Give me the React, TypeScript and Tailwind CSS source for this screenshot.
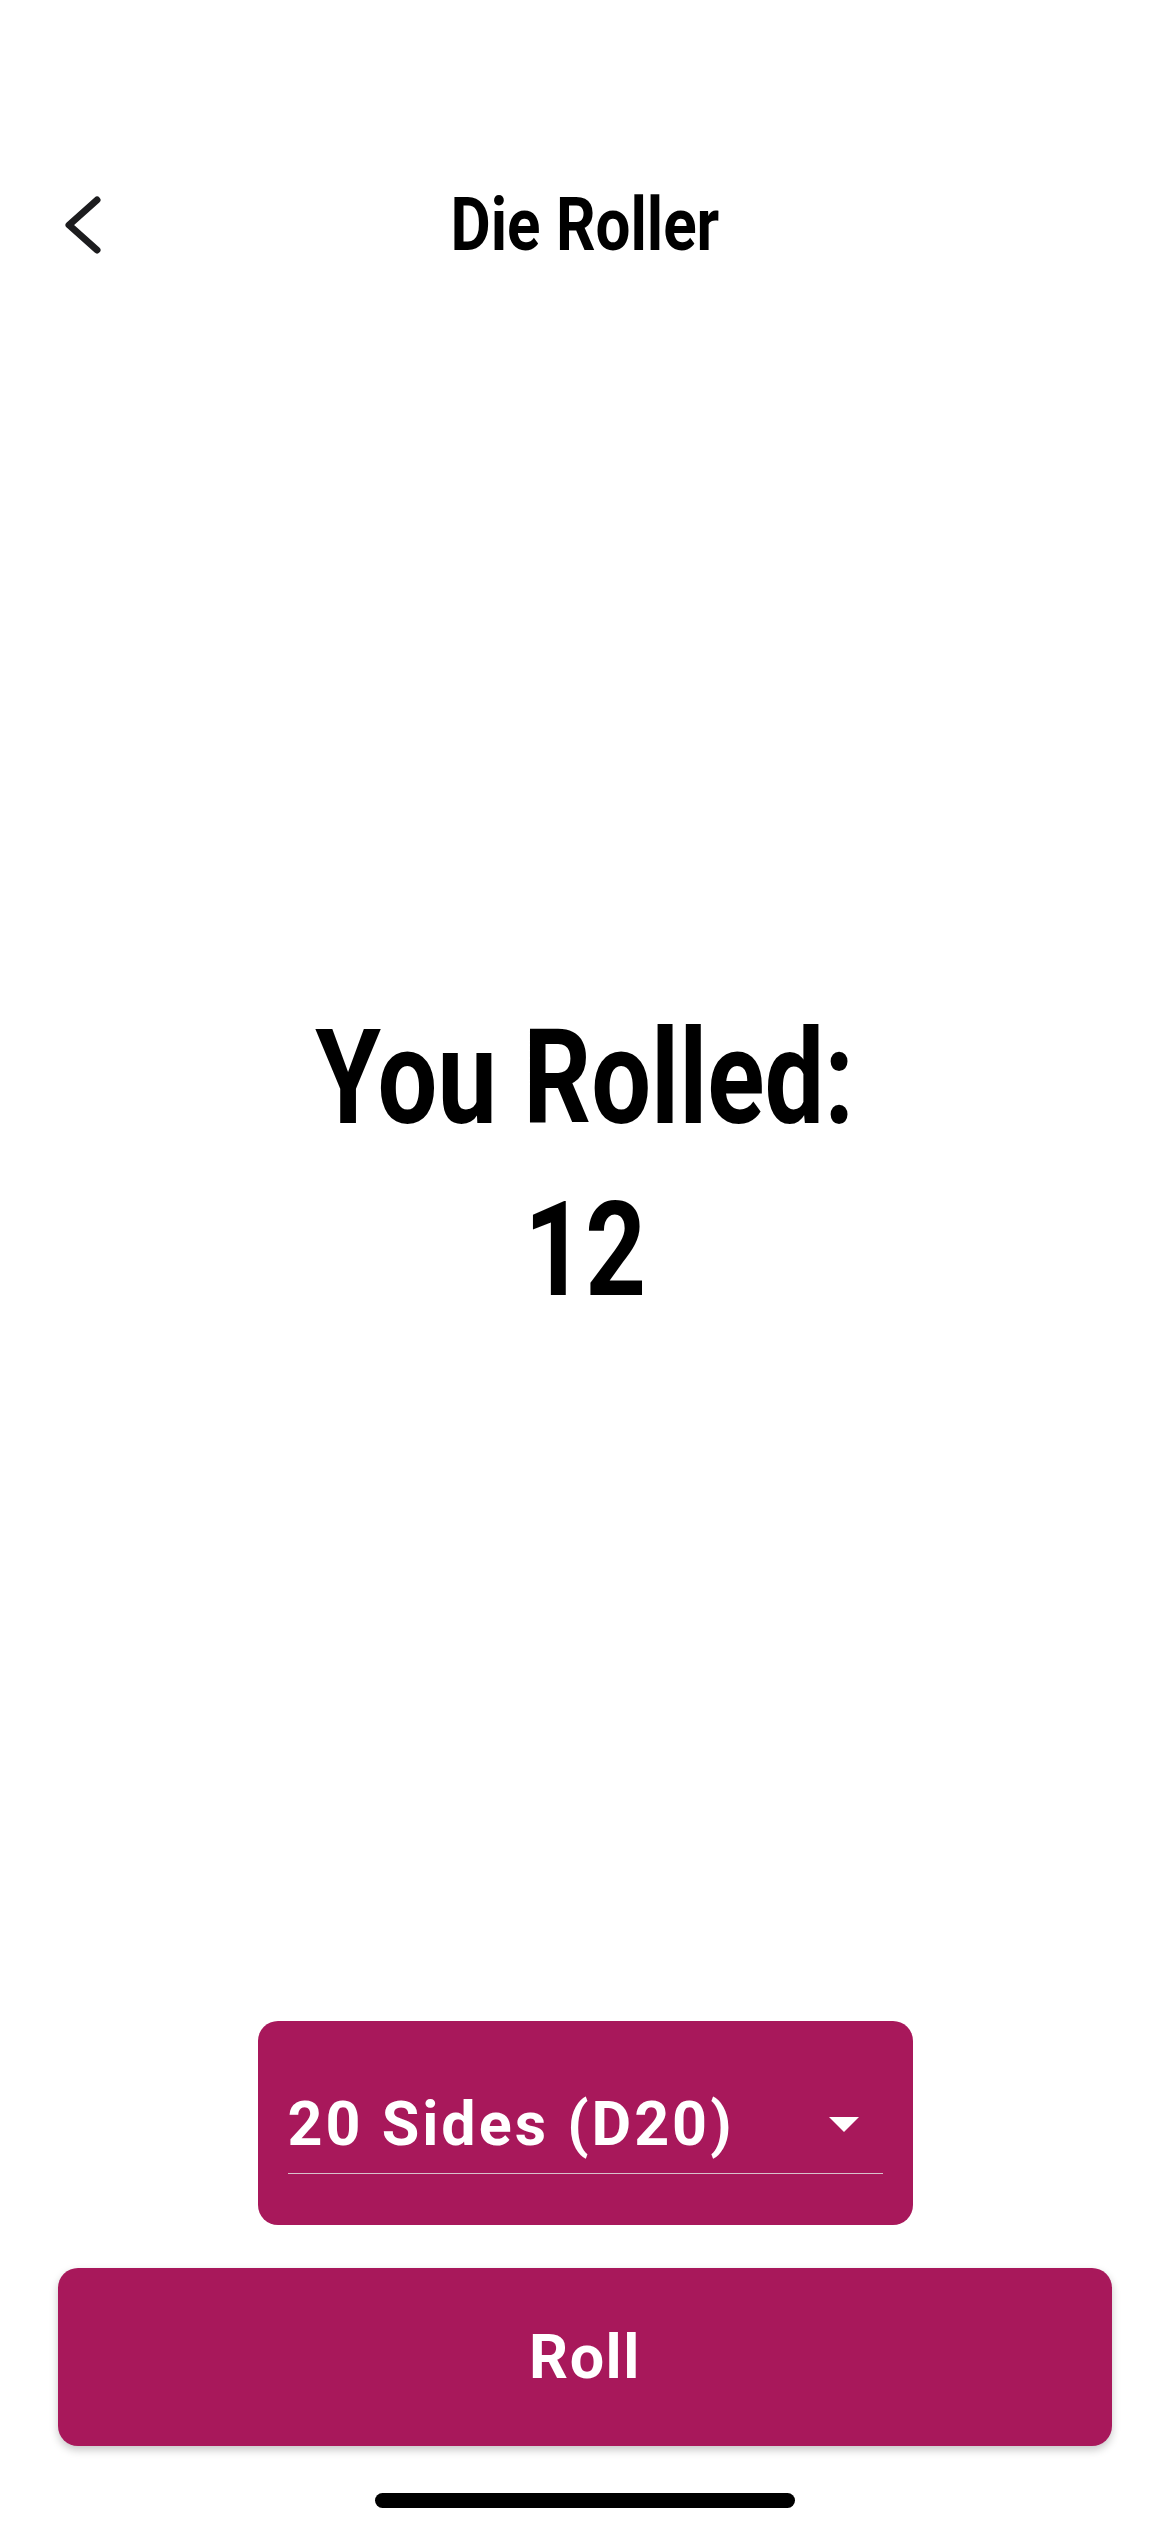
import React, { useState } from 'react';

const ROBOTO = "font-['Roboto','Liberation_Sans',sans-serif]";

const BackChevron: React.FC = () => (
    <svg width="42" height="58" viewBox="0 0 42 58" fill="none" className="block">
        <path d="M35 4 L7 29 L35 54" stroke="#1c1c1e" strokeWidth="7" strokeLinecap="round" strokeLinejoin="round" />
    </svg>
);

const DropArrow: React.FC = () => (
    <svg width="30" height="15" viewBox="0 0 30 15" className="block">
        <polygon points="0,0 30,0 15,15" fill="#ffffff" />
    </svg>
);

export default function App() {
    const [sides] = useState(20);
    const [result] = useState(12);

    return (
        <div className={`w-[1170px] h-[2532px] bg-white flex flex-col ${ROBOTO}`}>
            {/* header */}
            <div className="pt-[187px] px-[62px] grid grid-cols-[1fr_auto_1fr] items-center h-[262px]">
                <button className="justify-self-start">
                    <BackChevron />
                </button>
                <h1 className="text-[75px] leading-none font-bold text-black">
                    <span className="inline-block scale-x-[0.825]">Die Roller</span>
                </h1>
                <div />
            </div>

            {/* result */}
            <div className="mt-[730px] flex flex-col items-center text-[131px] leading-[172px] font-bold text-black">
                <span className="inline-block scale-x-[0.81]">You Rolled:</span>
                <span className="inline-block scale-x-[0.81]">{result}</span>
            </div>

            {/* die picker */}
            <div className="mt-[685px] mx-auto w-[655px] h-[204px] rounded-[20px] bg-[#a8185b] px-[30px] pt-[73px]">
                <div className="flex items-center justify-between pb-[18px] border-b-[1.5px] border-[#d9c2cc]">
                    <span className="text-[61px] leading-none font-bold text-white tracking-[3px]">
                        {sides} Sides (D{sides})
                    </span>
                    <span className="mr-[24px]">
                        <DropArrow />
                    </span>
                </div>
            </div>

            {/* roll button */}
            <button className="mt-[43px] mx-[58px] h-[178px] rounded-[20px] bg-[#a8185b] shadow-[0_4px_8px_rgba(0,0,0,0.22)] flex items-center justify-center">
                <span className="text-[61px] leading-none font-bold text-white tracking-[1.5px]">Roll</span>
            </button>

            {/* home indicator */}
            <div className="mt-[47px] mx-auto w-[420px] h-[15px] rounded-full bg-black" />
        </div>
    );
}
